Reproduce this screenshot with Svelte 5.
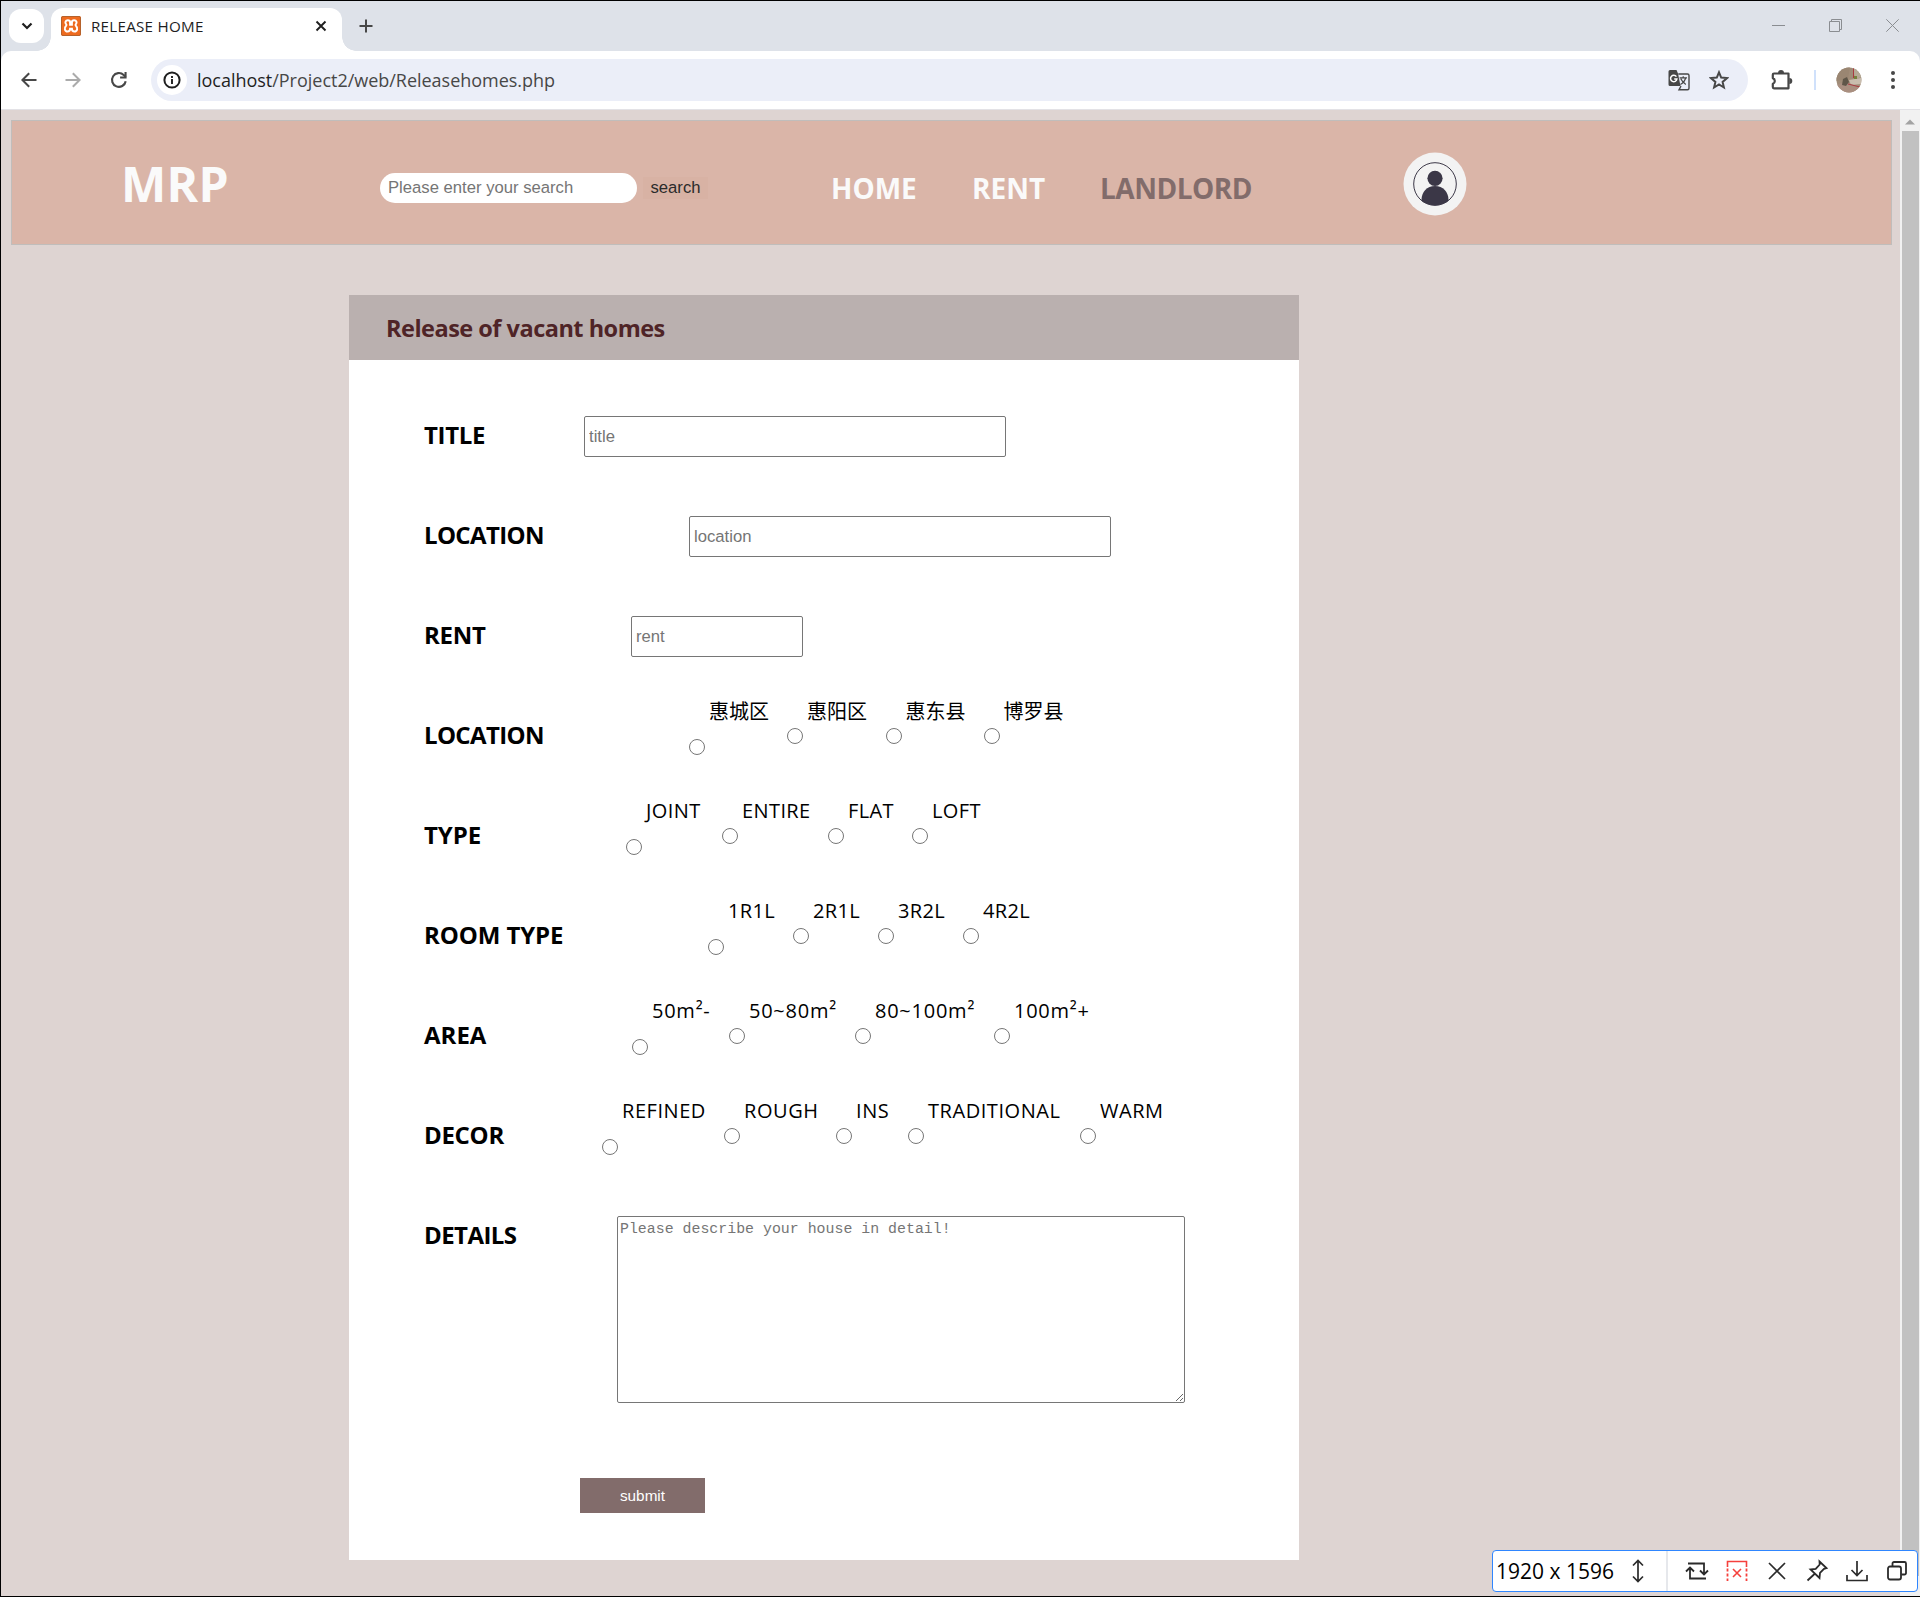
<script>
  const textRows = [
    { label: 'TITLE', hint: 'title', offset: 160, width: 422, tracking: -0.35 },
    { label: 'LOCATION', hint: 'location', offset: 265, width: 422, tracking: -0.65 },
    { label: 'RENT', hint: 'rent', offset: 207, width: 172, tracking: -0.3 }
  ];

  // Each choice carries its text and the width of the slot it takes in the row.
  const choiceRows = [
    { label: 'LOCATION', offset: 265, tracking: -0.65, spread: 0, choices: [['惠城区', 98], ['惠阳区', 98.5], ['惠东县', 98], ['博罗县', 98]] },
    { label: 'TYPE', offset: 202, tracking: -0.1, spread: 0.4, choices: [['JOINT', 96], ['ENTIRE', 106], ['FLAT', 84], ['LOFT', 84]] },
    { label: 'ROOM TYPE', offset: 284, tracking: -0.1, spread: 0.35, choices: [['1R1L', 85], ['2R1L', 85], ['3R2L', 85], ['4R2L', 85]] },
    { label: 'AREA', offset: 208, tracking: 0, spread: 0.75, choices: [['50m²-', 97], ['50~80m²', 126], ['80~100m²', 139], ['100m²+', 100]] },
    { label: 'DECOR', offset: 178, tracking: -0.3, spread: 0.55, choices: [['REFINED', 122], ['ROUGH', 112], ['INS', 72], ['TRADITIONAL', 172], ['WARM', 90]] }
  ];
</script>

<div class="screen">
  <div class="tabstrip">
    <div class="tab-search">
      <svg width="12" height="8" viewBox="0 0 12 8"><path d="M1.500 1.500 6 6l4.500-4.500" fill="none" stroke="#1f1f1f" stroke-width="2.200" /></svg>
    </div>
    <div class="tab">
      <svg class="favicon" width="20" height="20" viewBox="0 0 20 20">
        <rect width="20" height="20" rx="2" fill="#ee6b1f" />
        <rect x="0.500" y="0.500" width="19" height="19" rx="1.500" fill="none" stroke="#b5622c" />
        <path d="M6.800 4.300c-2.300 0-3 2.300-1.800 3.600.7.700.7 1.300 0 2-2.200 1.900-1.200 5.600 1.500 5.600 1.800 0 2.600-1.300 2.600-2.800h1.800c0 1.500.8 2.800 2.600 2.800 2.700 0 3.700-3.700 1.500-5.600-.7-.7-.7-1.300 0-2 1.200-1.300.5-3.600-1.800-3.600-1.500 0-2.300 1-2.300 2.300v2.100H9.100V6.600c0-1.300-.8-2.300-2.300-2.300z" fill="none" stroke="#fff" stroke-width="2" />
      </svg>
      <span class="tab-title">RELEASE HOME</span>
      <svg class="tab-close" width="12" height="12" viewBox="0 0 12 12"><path d="m1.500 1.500 9 9m0-9-9 9" stroke="#1f1f1f" stroke-width="1.900" /></svg>
    </div>
    <svg class="new-tab" width="14" height="14" viewBox="0 0 14 14"><path d="M7 .5v13M.5 7h13" stroke="#474747" stroke-width="2" /></svg>
    <div class="window-buttons">
      <svg width="13" height="13" viewBox="0 0 13 13"><path d="M0 6.500h13" stroke="#8a8d91" /></svg>
      <svg width="13" height="13" viewBox="0 0 13 13"><path d="M.5 2.500h10v10H.5zM2.500 2.500v-2h10v10h-2" fill="none" stroke="#8a8d91" /></svg>
      <svg width="13" height="13" viewBox="0 0 13 13"><path d="m.3.3 12.400 12.400m0-12.400L.3 12.700" stroke="#8a8d91" /></svg>
    </div>
  </div>

  <div class="toolbar-back">
    <div class="toolbar">
      <svg class="nav-icon" width="16" height="16" viewBox="0 0 16 16"><path d="M15.500 8H2M8.200 1.200 1.400 8l6.800 6.800" fill="none" stroke="#474747" stroke-width="2" /></svg>
      <svg class="nav-icon" width="16" height="16" viewBox="0 0 16 16"><path d="M.5 8H14M7.800 1.200 14.600 8l-6.800 6.800" fill="none" stroke="#ababab" stroke-width="2" /></svg>
      <svg class="nav-icon reload" width="18" height="18" viewBox="0 0 18 18"><path d="M15.700 10.200a6.900 6.900 0 1 1-2-6.200l2 2" fill="none" stroke="#474747" stroke-width="2.100" /><path d="M16.600 1v6.500h-6.500V5.400h4.400V1z" fill="#474747" /></svg>
      <div class="address">
        <span class="site-info">
          <svg width="18" height="18" viewBox="0 0 18 18"><circle cx="9" cy="9" r="7.600" fill="none" stroke="#1f1f1f" stroke-width="2" /><path d="M9 8v5M9 5v1.900" stroke="#1f1f1f" stroke-width="1.900" /></svg>
        </span>
        <span class="url">localhost<span class="path">/Project2/web/Releasehomes.php</span></span>
        <svg class="translate" width="22" height="22" viewBox="0 0 22 22">
          <path d="M2 1h6.500l1.500 3.500L12.500 17H2a1.500 1.500 0 0 1-1.500-1.500v-13A1.500 1.500 0 0 1 2 1z" fill="#474747" />
          <path d="M10.300 5h9.200a1.500 1.500 0 0 1 1.500 1.500v12.800a1.500 1.500 0 0 1-1.500 1.500H11L13 17" fill="none" stroke="#474747" stroke-width="1.400" />
          <path d="M8.400 7.700A3.200 3.200 0 1 0 8.900 10H6.200" fill="none" stroke="#fff" stroke-width="1.500" />
          <path d="M11.600 8.800h7.400M15.200 7.300v1.500M17.600 9c-.7 3-2.800 5.200-5.200 6.500M12.800 9.800c1 2.200 2.900 4.200 5 5.600" fill="none" stroke="#474747" stroke-width="1.200" />
        </svg>
        <svg class="star" width="20" height="20" viewBox="0 0 20 20"><path d="m10 2.300 2.200 5.300 5.800.5-4.400 3.800 1.300 5.600L10 14.500l-4.900 3 1.300-5.600L2 8.100l5.800-.5z" fill="none" stroke="#474747" stroke-width="2" /></svg>
      </div>
      <svg class="puzzle" width="22" height="22" viewBox="0 0 22 22">
        <path d="M3 4.500h14.500v14.800H3a1.200 1.200 0 0 1-1.200-1.200v-3.200a3.100 3.100 0 0 0 0-5.800V5.700A1.200 1.200 0 0 1 3 4.500z" fill="none" stroke="#474747" stroke-width="2.200" stroke-linejoin="round" />
        <path d="M7 4a3 3 0 0 1 6 0zM18.300 9a3 3 0 0 1 0 6z" fill="#474747" />
      </svg>
      <span class="bar"></span>
      <svg class="profile" width="26" height="26" viewBox="0 0 26 26">
        <defs><clipPath id="profile-clip"><circle cx="13" cy="13" r="12.500" /></clipPath></defs>
        <g clip-path="url(#profile-clip)">
          <path d="M0 0h26v26H0z" fill="#a08c78" />
          <path d="M0 0h14l-2 12L0 14z" fill="#9a8672" /><path d="M17 1h6l3 9-7 2z" fill="#b5aa96" />
          <path d="m13 13 12-2v6l-10 1z" fill="#c9bdae" /><path d="M0 18l9-3 14 5-2 6H4z" fill="#a98f80" />
          <path d="M7 12l4-2 2 5-3 4-4-1z" fill="#5f5648" /><path d="M17.500 1v10M12 17l12 3" stroke="#a93a40" />
          <path d="M18 9h3v3h-3z" fill="#76813c" />
        </g>
      </svg>
      <svg class="more" width="4" height="18" viewBox="0 0 4 18"><g fill="#474747"><circle cx="2" cy="2" r="2" /><circle cx="2" cy="9" r="2" /><circle cx="2" cy="16" r="2" /></g></svg>
    </div>
  </div>

  <div class="viewport">
    <main>
      <header>
        <strong class="brand">MRP</strong>
        <input class="search-box" placeholder="Please enter your search" />
        <button class="search-btn">search</button>
        <nav>
          <span class="home">HOME</span>
          <span class="rent">RENT</span>
          <span class="landlord">LANDLORD</span>
        </nav>
        <svg class="user" width="64" height="64" viewBox="0 0 64 64">
          <defs><clipPath id="user-clip"><circle cx="32" cy="32" r="21.500" /></clipPath></defs>
          <circle cx="32" cy="32" r="31.500" fill="#f3f3f3" />
          <g fill="#3b3747" clip-path="url(#user-clip)"><circle cx="32" cy="26.300" r="7.600" /><path d="M18.500 55V48c0-8 5.500-14 13.500-14s13.500 6 13.500 14v7z" /></g>
          <circle cx="32" cy="32" r="21.300" fill="none" stroke="#3b3747" />
        </svg>
      </header>

      <section class="card">
        <h1>Release of vacant homes</h1>
        <form>
          {#each textRows as row}
            <div class="row">
              <span class="label" style:width="{row.offset}px" style:letter-spacing="{row.tracking}px">{row.label}</span>
              <input class="field" placeholder={row.hint} style:width="{row.width}px" />
            </div>
          {/each}
          {#each choiceRows as row, r}
            <div class="row">
              <span class="label" style:width="{row.offset}px" style:letter-spacing="{row.tracking}px">{row.label}</span>
              {#each row.choices as [text, width]}
                <label class="choice" class:latin={row.spread > 0} style:width="{width}px" style:letter-spacing="{row.spread}px">
                  <input type="radio" name="group{r}" />
                  <span>{text}</span>
                </label>
              {/each}
            </div>
          {/each}
          <div class="row details">
            <span class="label">DETAILS</span>
            <textarea placeholder="Please describe your house in detail!"></textarea>
          </div>
          <button class="submit" type="button">submit</button>
        </form>
      </section>
    </main>
    <div class="scrollbar">
      <svg width="10" height="6" viewBox="0 0 10 6"><path d="M0 5.500 5 .5l5 5z" fill="#a3a3a3" /></svg>
      <div class="thumb"></div>
    </div>
  </div>

  <div class="capture-bar">
    <span class="size">1920 x 1596</span>
    <svg class="updown" width="12" height="24" viewBox="0 0 12 24"><path d="M6 2v20M1 6.500 6 1.500l5 5M1 17.500l5 5 5-5" fill="none" stroke="#2b2b2b" stroke-width="1.700" /></svg>
    <span class="split"></span>
    <div class="tools">
      <svg width="24" height="24" viewBox="0 0 24 24"><path d="M3 4.500h16v11M21 19.500H5v-11M1 12.500l4-4 4 4M15 11.500l4 4 4-4" fill="none" stroke="#2b2b2b" stroke-width="1.800" /></svg>
      <svg width="24" height="24" viewBox="0 0 24 24"><path d="M2.500 8V2.500h19V8M8 10l8 8m0-8-8 8" fill="none" stroke="#f5403c" stroke-width="1.600" /><path d="M2.500 9.500V22m19-12.500V22" stroke="#f5403c" stroke-width="1.800" stroke-dasharray="3 2" /></svg>
      <svg width="24" height="24" viewBox="0 0 24 24"><path d="m4 4 16 16m0-16L4 20" stroke="#2b2b2b" stroke-width="1.700" /></svg>
      <svg width="24" height="24" viewBox="0 0 24 24"><path d="m14.500 2.500 7 6.500-2.500.8-4 4-.5 5.200-9-8.500 5.200-.7 4-4.300zM9.500 15 2.500 21.500" fill="none" stroke="#2b2b2b" stroke-width="1.800" /></svg>
      <svg width="24" height="24" viewBox="0 0 24 24"><path d="M12 2v14.500M6.500 11l5.500 5.500 5.500-5.500M2 16v5.500h20V16" fill="none" stroke="#2b2b2b" stroke-width="1.700" /></svg>
      <svg width="24" height="24" viewBox="0 0 24 24"><rect x="3" y="7.500" width="13" height="13" rx="2" fill="none" stroke="#2b2b2b" stroke-width="1.800" /><path d="M7.500 7V4.500A1.500 1.500 0 0 1 9 3h10.500A1.500 1.500 0 0 1 21 4.500V14a1.500 1.500 0 0 1-1.500 1.500H16.500" fill="none" stroke="#2b2b2b" stroke-width="1.800" /></svg>
    </div>
  </div>
</div>

<style>
  :global(body) {
    margin: 0;
    overflow: hidden;
  }
  .screen,
  .screen :global(*) {
    box-sizing: border-box;
  }
  .screen {
    position: relative;
    display: flex;
    flex-direction: column;
    width: 1920px;
    height: 1597px;
    border: solid #000;
    border-width: 1px 0 1px 1px;
    font-family: 'Open Sans', 'Noto Sans CJK SC', sans-serif;
    color: #000;
    background: #ded4d2;
  }
  svg {
    display: block;
    flex: none;
  }

  .tabstrip {
    display: flex;
    align-items: flex-start;
    height: 50px;
    padding: 7px 13px 0 8px;
    background: #dee2e9;
  }
  .tab-search {
    display: flex;
    align-items: center;
    justify-content: center;
    width: 35px;
    height: 34px;
    margin-top: 1px;
    border-radius: 12px;
    background: #fff;
  }
  .tab {
    position: relative;
    display: flex;
    align-items: center;
    width: 291px;
    height: 43px;
    margin-left: 7px;
    padding: 0 15px 7px 10px;
    border-radius: 12px 12px 0 0;
    background: #fff;
  }
  .tab::before,
  .tab::after {
    content: '';
    position: absolute;
    bottom: 0;
    width: 14px;
    height: 14px;
  }
  .tab::before {
    right: 100%;
    background: radial-gradient(circle at 0 0, transparent 13.5px, #fff 14px);
  }
  .tab::after {
    left: 100%;
    background: radial-gradient(circle at 100% 0, transparent 13.5px, #fff 14px);
  }
  .tab-title {
    flex: 1;
    margin-left: 10px;
    font-size: 15.2px;
    letter-spacing: 0.25px;
    color: #1f1f1f;
  }
  .new-tab {
    margin: 11px 0 0 17px;
  }
  .window-buttons {
    display: flex;
    gap: 44px;
    margin: 11px 8px 0 auto;
  }

  .toolbar-back {
    background: #dee2e9;
  }
  .toolbar {
    display: flex;
    align-items: center;
    height: 59px;
    padding: 0 24px 0 20px;
    border-bottom: 1px solid #e3e2e6;
    border-radius: 10px 10px 0 0;
    background: #fff;
  }
  .nav-icon {
    margin-right: 28px;
  }
  .nav-icon.reload {
    margin: 0 23px 0 1px;
  }
  .address {
    display: flex;
    align-items: center;
    width: 1597px;
    height: 42px;
    padding: 0 19px 0 6px;
    border-radius: 21px;
    background: #ebeef8;
  }
  .site-info {
    display: flex;
    align-items: center;
    justify-content: center;
    width: 30px;
    height: 30px;
    border-radius: 50%;
    background: #fff;
  }
  .url {
    flex: 1;
    margin-left: 10px;
    font-size: 18px;
    letter-spacing: -0.02px;
    color: #1f1f1f;
  }
  .path {
    color: #474747;
  }
  .star {
    margin-left: 19px;
  }
  .puzzle {
    margin-left: 23px;
  }
  .bar {
    width: 2px;
    height: 20px;
    margin-left: 21px;
    background: #d0e1fb;
  }
  .profile {
    margin-left: 20px;
  }
  .more {
    margin-left: 29px;
  }

  .viewport {
    display: flex;
    flex: 1;
    min-height: 0;
  }
  main {
    flex: 1;
    padding: 10px 8px 0 10px;
  }
  header {
    display: flex;
    align-items: center;
    height: 125px;
    padding-left: 109px;
    border: 1px solid #c0bdbb;
    background: #dab5a8;
  }
  .brand {
    width: 259px;
    margin-top: 2px;
    font-size: 48px;
    line-height: 60px;
    letter-spacing: 0.3px;
    color: #fafafa;
  }
  .search-box {
    width: 257px;
    height: 30px;
    margin-top: 11px;
    padding: 0 8px;
    border: 0;
    border-radius: 15px;
    font: 16.67px 'Liberation Sans', sans-serif;
  }
  .search-btn {
    width: 65px;
    height: 22px;
    margin: 11px 0 0 6px;
    padding: 0;
    border: 0;
    font: 16.67px/22px 'Liberation Sans', sans-serif;
    color: #2b2b2b;
    background: #d8b2a4;
  }
  nav {
    display: flex;
    margin: 11px 0 0 123px;
    font-size: 28px;
    font-weight: 700;
    color: #fafafa;
  }
  .home {
    width: 141px;
  }
  .rent {
    width: 128px;
  }
  .landlord {
    width: 303px;
    letter-spacing: -0.5px;
    color: #826c6b;
  }
  .user {
    margin-top: 2px;
  }

  .card {
    width: 950px;
    height: 1265px;
    margin: 50px 0 0 338px;
    background: #fff;
  }
  h1 {
    height: 65px;
    margin: 0;
    padding-left: 37px;
    font-size: 23.5px;
    line-height: 66px;
    letter-spacing: -0.5px;
    color: #4f2427;
    background: #bab0af;
  }
  form {
    display: flex;
    flex-direction: column;
    align-items: flex-start;
    padding: 27px 0 0 75px;
  }
  .row {
    display: flex;
    align-items: center;
    height: 100px;
  }
  .label {
    padding-bottom: 6px;
    font-size: 24px;
    font-weight: 700;
    white-space: nowrap;
  }
  .field {
    height: 41px;
    margin-bottom: 1px;
    padding: 1px 4px 0;
    border: 1px solid #767676;
    border-radius: 2px;
    font: 16.67px 'Liberation Sans', sans-serif;
  }
  ::placeholder {
    color: #757575;
  }
  .choice {
    display: flex;
    height: 50px;
    font-size: 20px;
    line-height: 28px;
    white-space: nowrap;
  }
  .choice input {
    width: 16px;
    height: 16px;
    margin: 16px 4px 0 0;
    flex: none;
  }
  .label + .choice input {
    margin-top: 27px;
  }
  .choice span {
    margin-top: -14px;
  }
  .latin span {
    margin-top: -15px;
  }
  .details {
    align-items: flex-start;
    height: 291px;
  }
  .details .label {
    width: 193px;
    padding-top: 31px;
    letter-spacing: -0.55px;
  }
  textarea {
    width: 568px;
    height: 187px;
    margin-top: 29px;
    padding: 4px 2px 2px;
    border: 1px solid #767676;
    border-radius: 2px;
    font: 14.9px 'Liberation Mono', monospace;
  }
  .submit {
    width: 125px;
    height: 35px;
    margin-left: 156px;
    padding: 0;
    border: 0;
    font: 15.3px 'Liberation Sans', sans-serif;
    color: #fff;
    background: #826c6b;
  }

  .scrollbar {
    display: flex;
    flex-direction: column;
    align-items: center;
    width: 20px;
    padding-top: 9px;
    background: #f1f1f1;
  }
  .thumb {
    width: 17px;
    height: 1445px;
    margin-top: 6px;
    background: #c1c1c1;
  }

  .capture-bar {
    position: absolute;
    right: 2px;
    bottom: 4px;
    display: flex;
    align-items: center;
    width: 426px;
    height: 42px;
    padding-left: 3px;
    border: 1px solid #2f86ff;
    border-radius: 4px;
    background: #fff;
  }
  .size {
    width: 133px;
    font-size: 21px;
    white-space: nowrap;
  }
  .updown {
    margin-left: 3px;
  }
  .split {
    width: 2px;
    height: 40px;
    margin: 0 17px 0 22px;
    background: #e6e8ec;
  }
  .tools {
    display: flex;
    gap: 16px;
  }
</style>
